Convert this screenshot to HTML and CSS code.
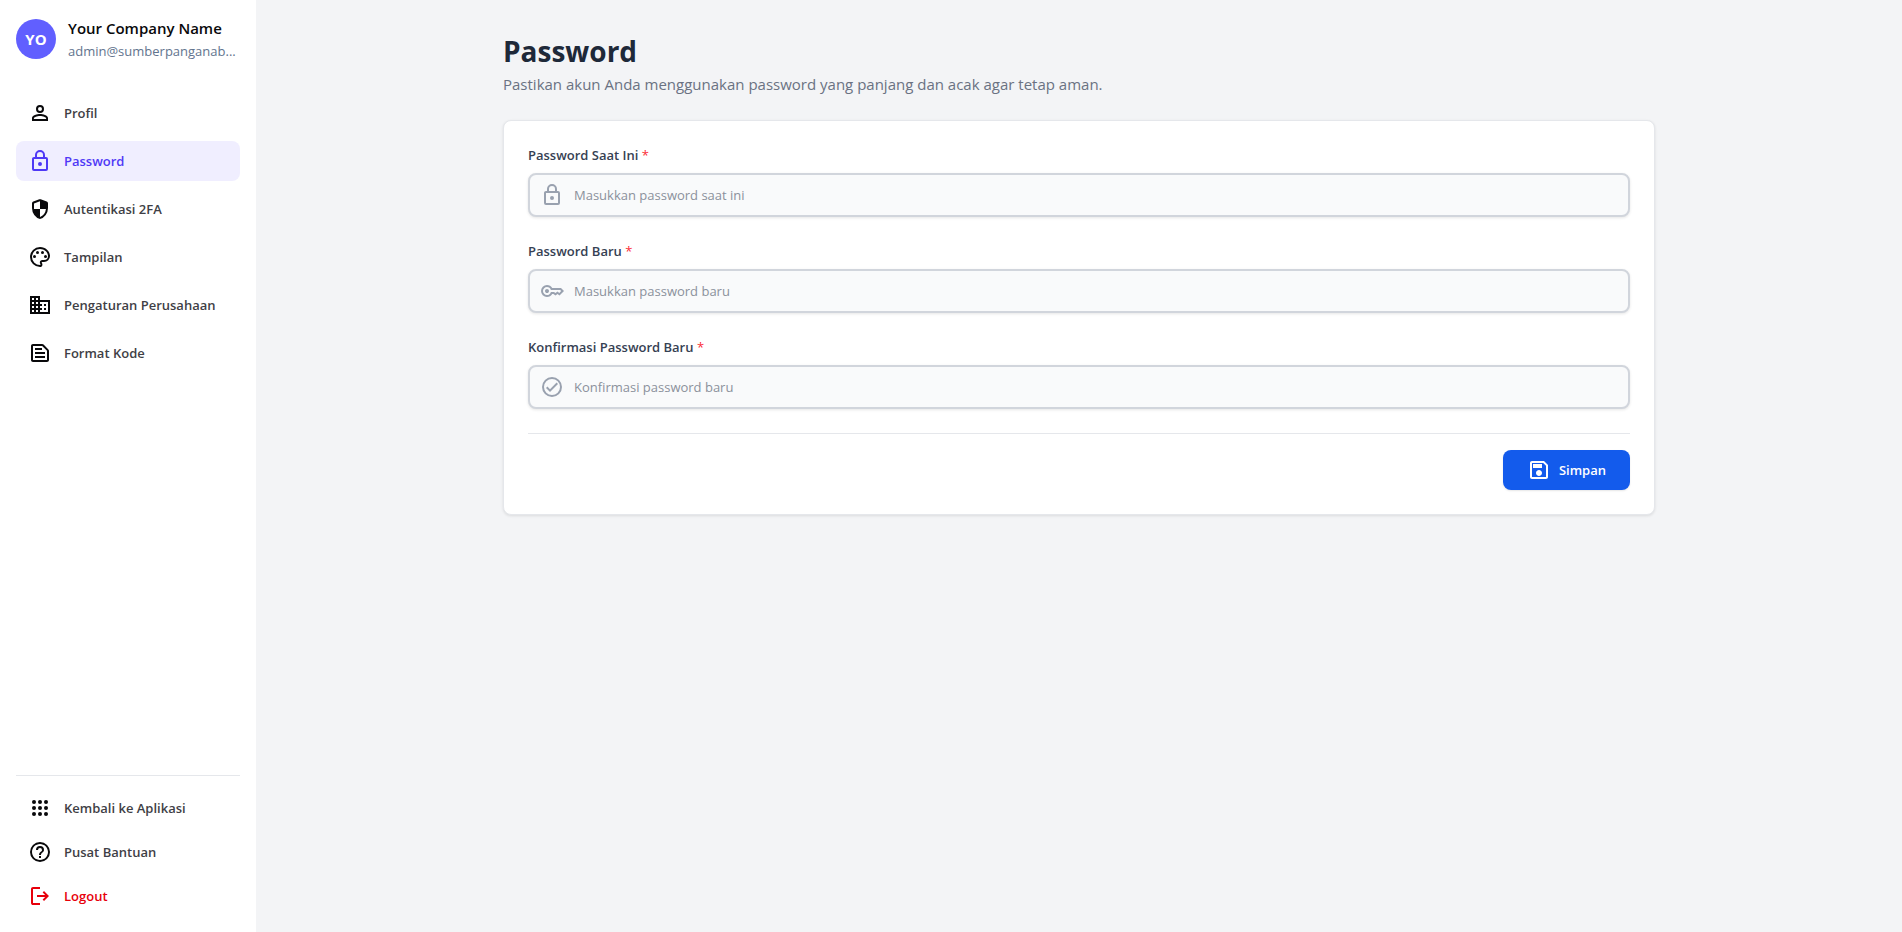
FILE: index.html
```
<!DOCTYPE html>
<html lang="id">

<head>
  <meta charset="UTF-8">
  <meta name="viewport" content="width=device-width, initial-scale=1.0">
  <title>Password</title>
  <link rel="stylesheet" href="styles.css">
</head>

<body>
  <div class="layout">
    <aside class="sidebar">
      <div class="company">
        <div class="avatar">YO</div>
        <div class="company-info">
          <p class="company-name">Your Company Name</p>
          <p class="company-email">admin@sumberpanganab...</p>
        </div>
      </div>

      <nav class="menu">
        <a href="#profil" class="menu-item">
          <svg class="icon" viewBox="0 0 24 24"><path d="M12 4a4 4 0 0 1 4 4a4 4 0 0 1-4 4a4 4 0 0 1-4-4a4 4 0 0 1 4-4m0 2a2 2 0 0 0-2 2a2 2 0 0 0 2 2a2 2 0 0 0 2-2a2 2 0 0 0-2-2m0 7c2.67 0 8 1.33 8 4v3H4v-3c0-2.67 5.33-4 8-4m0 1.9c-2.97 0-6.1 1.46-6.1 2.1v1.1h12.2V17c0-.64-3.13-2.1-6.1-2.1"/></svg>
          Profil
        </a>
        <a href="#password" class="menu-item active">
          <svg class="icon" viewBox="0 0 24 24"><path d="M12 17a2 2 0 1 1 0-4a2 2 0 0 1 0 4m6 3V10H6v10zm0-12a2 2 0 0 1 2 2v10a2 2 0 0 1-2 2H6a2 2 0 0 1-2-2V10c0-1.11.89-2 2-2h1V6a5 5 0 0 1 10 0v2zm-6-5a3 3 0 0 0-3 3v2h6V6a3 3 0 0 0-3-3"/></svg>
          Password
        </a>
        <a href="#2fa" class="menu-item">
          <svg class="icon" viewBox="0 0 24 24"><path d="M12 22q-3.475-.875-5.737-3.988T4 11.1V6.4q0-.65.363-1.15t.937-.75l6-2.25q.35-.125.7-.125t.7.125l6 2.25q.575.25.938.75T20 6.4v4.7q0 3.8-2.262 6.913T12 22m0-2.1q2.425-.75 4.05-2.963T17.95 12H12V4.125l-6 2.25V12h6z"/></svg>
          Autentikasi 2FA
        </a>
        <a href="#tampilan" class="menu-item">
          <svg class="icon" viewBox="0 0 24 24"><path d="M12 22A10 10 0 0 1 2 12A10 10 0 0 1 12 2c5.5 0 10 4 10 9a6 6 0 0 1-6 6h-1.8c-.3 0-.5.2-.5.5c0 .1.1.2.1.3c.4.5.6 1.1.6 1.7c.1 1.4-1 2.5-2.4 2.5m0-18a8 8 0 0 0-8 8a8 8 0 0 0 8 8c.3 0 .5-.2.5-.5c0-.2-.1-.3-.1-.4c-.4-.5-.6-1-.6-1.6c0-1.4 1.1-2.5 2.5-2.5H16a4 4 0 0 0 4-4c0-3.9-3.6-7-8-7"/><circle cx="6.5" cy="11.5" r="1.5"/><circle cx="9.5" cy="7.5" r="1.5"/><circle cx="14.5" cy="7.5" r="1.5"/><circle cx="17.5" cy="11.5" r="1.5"/></svg>
          Tampilan
        </a>
        <a href="#perusahaan" class="menu-item">
          <svg class="icon" viewBox="0 0 24 24"><path d="M18 15h-2v2h2m0-6h-2v2h2m2 6h-8v-2h2v-2h-2v-2h2v-2h-2V9h8M10 7H8V5h2m0 6H8V9h2m0 6H8v-2h2m0 6H8v-2h2M6 7H4V5h2m0 6H4V9h2m0 6H4v-2h2m0 6H4v-2h2m6-10V3H2v18h20V7z"/></svg>
          Pengaturan Perusahaan
        </a>
        <a href="#kode" class="menu-item">
          <svg class="icon" viewBox="0 0 24 24"><path d="M14.17 5 19 9.83V19H5V5h9.17m0-2H5c-1.1 0-2 .9-2 2v14c0 1.1.9 2 2 2h14c1.1 0 2-.9 2-2V9.83c0-.53-.21-1.04-.59-1.41l-4.83-4.83c-.37-.38-.88-.59-1.41-.59zM7 15h10v2H7zm0-4h10v2H7zm0-4h7v2H7z"/></svg>
          Format Kode
        </a>
      </nav>

      <nav class="menu-bottom">
        <a href="#aplikasi" class="menu-item">
          <svg class="icon" viewBox="0 0 24 24"><circle cx="6" cy="6" r="2"/><circle cx="12" cy="6" r="2"/><circle cx="18" cy="6" r="2"/><circle cx="6" cy="12" r="2"/><circle cx="12" cy="12" r="2"/><circle cx="18" cy="12" r="2"/><circle cx="6" cy="18" r="2"/><circle cx="12" cy="18" r="2"/><circle cx="18" cy="18" r="2"/></svg>
          Kembali ke Aplikasi
        </a>
        <a href="#bantuan" class="menu-item">
          <svg class="icon" viewBox="0 0 24 24"><path d="M11 18h2v-2h-2zm1-16A10 10 0 0 0 2 12a10 10 0 0 0 10 10a10 10 0 0 0 10-10A10 10 0 0 0 12 2m0 18c-4.41 0-8-3.59-8-8s3.59-8 8-8s8 3.59 8 8s-3.59 8-8 8m0-14a4 4 0 0 0-4 4h2a2 2 0 0 1 2-2a2 2 0 0 1 2 2c0 2-3 1.75-3 5h2c0-2.25 3-2.5 3-5a4 4 0 0 0-4-4"/></svg>
          Pusat Bantuan
        </a>
        <a href="#logout" class="menu-item logout">
          <svg class="icon" viewBox="0 0 24 24"><path d="M5 21q-.825 0-1.412-.587T3 19V5q0-.825.588-1.412T5 3h7v2H5v14h7v2zm11-4-1.375-1.45 2.55-2.55H9v-2h8.175l-2.55-2.55L16 7l5 5z"/></svg>
          Logout
        </a>
      </nav>
    </aside>

    <main class="content">
      <div class="container">
        <header>
          <h1>Password</h1>
          <p class="subtitle">Pastikan akun Anda menggunakan password yang panjang dan acak agar tetap aman.</p>
        </header>

        <form class="card">
          <div class="field">
            <label for="current">Password Saat Ini <span class="required">*</span></label>
            <div class="input-box">
              <svg class="icon" viewBox="0 0 24 24"><path d="M12 17a2 2 0 1 1 0-4a2 2 0 0 1 0 4m6 3V10H6v10zm0-12a2 2 0 0 1 2 2v10a2 2 0 0 1-2 2H6a2 2 0 0 1-2-2V10c0-1.11.89-2 2-2h1V6a5 5 0 0 1 10 0v2zm-6-5a3 3 0 0 0-3 3v2h6V6a3 3 0 0 0-3-3"/></svg>
              <input type="password" id="current" placeholder="Masukkan password saat ini">
            </div>
          </div>
          <div class="field">
            <label for="new">Password Baru <span class="required">*</span></label>
            <div class="input-box">
              <svg class="icon" viewBox="0 0 24 24"><path d="M7 14q-.825 0-1.412-.587T5 12t.588-1.412T7 10t1.413.588T9 12t-.587 1.413T7 14m0 4q-2.5 0-4.25-1.75T1 12t1.75-4.25T7 6q1.675 0 3.038.825T12.2 9H21l3 3-4.5 4.5-2-1.5-2 1.5-2.125-1.5H12.2q-.8 1.35-2.162 2.175T7 18m0-2q1.4 0 2.463-.85T10.875 13H14l1.45 1.025L17.5 12.5l1.775 1.375L21.15 12l-1-1h-9.275q-.35-1.3-1.412-2.15T7 8q-1.65 0-2.825 1.175T3 12t1.175 2.825T7 16"/></svg>
              <input type="password" id="new" placeholder="Masukkan password baru">
            </div>
          </div>
          <div class="field">
            <label for="confirm">Konfirmasi Password Baru <span class="required">*</span></label>
            <div class="input-box">
              <svg class="icon" viewBox="0 0 24 24"><path d="M12 2a10 10 0 1 0 0 20a10 10 0 0 0 0-20m0 18a8 8 0 1 1 0-16a8 8 0 0 1 0 16m4.59-12.42L10 14.17l-2.59-2.58L6 13l4 4 8-8z"/></svg>
              <input type="password" id="confirm" placeholder="Konfirmasi password baru">
            </div>
          </div>
          <div class="actions">
            <button type="submit">
              <svg class="icon" viewBox="0 0 24 24"><path d="M17 3H5c-1.11 0-2 .9-2 2v14c0 1.1.89 2 2 2h14c1.1 0 2-.9 2-2V7zm2 16H5V5h11.17L19 7.83zm-7-7c-1.66 0-3 1.34-3 3s1.34 3 3 3 3-1.34 3-3-1.34-3-3-3M6 6h9v4H6z"/></svg>
              Simpan
            </button>
          </div>
        </form>
      </div>
    </main>
  </div>
</body>

</html>
```

FILE: styles.css
```
* {
  box-sizing: border-box;
}

body {
  font-family: 'Open Sans', 'Noto Sans', sans-serif;
  background-color: #f3f4f6;
  margin: 0;
}

h1, p {
  margin: 0;
}

.layout {
  display: flex;
  min-height: 100vh;
}

.icon {
  width: 24px;
  height: 24px;
  flex-shrink: 0;
  fill: currentColor;
}

/* Sidebar */
.sidebar {
  display: flex;
  flex-direction: column;
  width: 256px;
  flex-shrink: 0;
  padding: 16px;
  background-color: white;
}

.company {
  display: flex;
  align-items: center;
  gap: 12px;
  height: 45px;
  margin-bottom: 32px;
}

.avatar {
  display: flex;
  align-items: center;
  justify-content: center;
  width: 40px;
  height: 40px;
  flex-shrink: 0;
  border-radius: 50%;
  background-color: #615fff;
  color: white;
  font-size: 15px;
  font-weight: 700;
}

.company-name {
  margin-bottom: 2px;
  font-size: 15px;
  line-height: 22px;
  font-weight: 600;
  color: #09090b;
}

.company-email {
  font-size: 13px;
  line-height: 20px;
  color: #62748e;
  white-space: nowrap;
}

.menu {
  display: flex;
  flex-direction: column;
  gap: 8px;
}

.menu-bottom {
  display: flex;
  flex-direction: column;
  gap: 4px;
  margin-top: auto;
  padding-top: 12px;
  border-top: 1px solid #e5e7eb;
}

.menu-item {
  display: flex;
  align-items: center;
  gap: 12px;
  height: 40px;
  padding: 0 12px;
  border-radius: 8px;
  color: #3f3f46;
  font-size: 13px;
  line-height: 21px;
  font-weight: 600;
  text-decoration: none;
}

.menu-item .icon {
  color: #09090b;
}

.menu-item.active {
  background-color: #f0eeff;
}

.menu-item.active,
.menu-item.active .icon {
  color: #4f39f6;
}

.menu-item.logout,
.menu-item.logout .icon {
  color: #e7000b;
}

/* Content */
.content {
  flex: 1;
  padding: 32px;
}

.container {
  max-width: 1152px;
  margin: 0 auto;
}

h1 {
  margin-bottom: 2px;
  font-size: 28px;
  line-height: 38px;
  font-weight: 700;
  color: #1e2939;
}

.subtitle {
  font-size: 15px;
  line-height: 24px;
  color: #6a7282;
}

.card {
  margin-top: 24px;
  padding: 24px;
  background-color: white;
  border: 1px solid #e5e7eb;
  border-radius: 8px;
  box-shadow: 0 1px 3px rgba(0, 0, 0, 0.1);
}

.field {
  margin-bottom: 24px;
}

label {
  display: block;
  margin-bottom: 8px;
  font-size: 13px;
  line-height: 20px;
  font-weight: 600;
  color: #364153;
}

.required {
  color: #fb2c36;
  font-weight: 400;
}

.input-box {
  display: flex;
  align-items: center;
  gap: 10px;
  height: 44px;
  padding: 0 10px;
  background-color: #f9fafb;
  border: 2px solid #d1d5dc;
  border-radius: 8px;
  box-shadow: 0 1px 3px rgba(0, 0, 0, 0.1);
}

.input-box .icon {
  color: #99a1af;
}

input {
  flex: 1;
  padding: 0;
  border: none;
  outline: none;
  background: transparent;
  font-family: inherit;
  font-size: 13px;
}

input::placeholder {
  color: #8b919b;
}

.input-box:focus-within {
  border-color: #135bec;
}

.actions {
  display: flex;
  justify-content: flex-end;
  padding-top: 16px;
  border-top: 1px solid #e5e7eb;
}

button {
  display: flex;
  align-items: center;
  gap: 8px;
  height: 40px;
  padding: 0 24px;
  border: none;
  border-radius: 8px;
  background-color: #135bec;
  color: white;
  font-family: inherit;
  font-size: 13px;
  line-height: 21px;
  font-weight: 600;
  box-shadow: 0 1px 2px rgba(0, 0, 0, 0.1);
  cursor: pointer;
}

button:hover {
  background-color: #1447e6;
}

@media (max-width: 768px) {
  .layout {
    flex-direction: column;
  }

  .sidebar {
    width: 100%;
  }
}
```
